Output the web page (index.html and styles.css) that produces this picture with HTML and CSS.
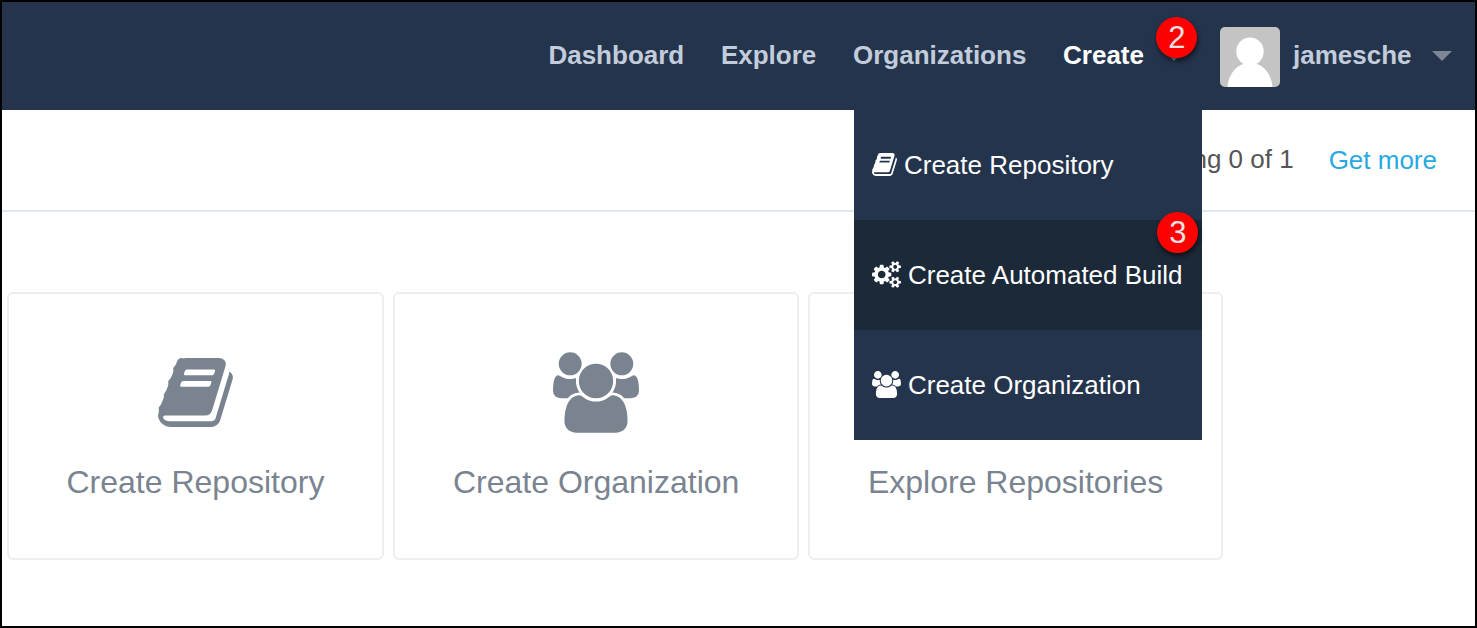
FILE: index.html
```
<!DOCTYPE html>
<html lang="en">
<head>
<meta charset="utf-8">
<title>Dashboard</title>
<link rel="stylesheet" href="styles.css">
</head>
<body>
<svg class="sprite" aria-hidden="true">
  <symbol id="book" viewBox="62 128 1668 1536"><path d="M1703 478q40 57 18 129l-275 906q-19 64-76.5 107.5t-122.5 43.5h-923q-77 0-148.5-53.5t-99.5-131.5q-24-67-2-127 0-4 3-27t4-37q1-8-3-21.5t-3-19.5q2-11 8-21t16.5-23.5 16.5-23.5q23-38 45-91.5t30-91.5q3-10 .5-30t-.5-28q3-11 17-28t17-23q21-36 42-92t25-90q1-9-2.5-32t.5-28q4-13 22-30.5t22-22.5q19-26 42.5-84.5t27.5-96.5q1-8-3-25.5t-2-26.5q2-8 9-18t18-23 17-21q8-12 16.5-30.5t15-35 16-36 19.5-32 26.5-23.5 36-11.5 47.5 5.5l-1 3q38-9 51-9h761q74 0 114 56t18 130l-274 906q-36 119-71.5 153.5t-128.5 34.5h-869q-27 0-38 15-11 16-1 43 24 70 144 70h923q29 0 56-15.5t35-41.5l300-987q7-22 5-57 38 15 59 43zm-1064 2q-4 13 2 22.5t20 9.5h608q13 0 25.5-9.5t16.5-22.5l21-64q4-13-2-22.5t-20-9.5h-608q-13 0-25.5 9.5t-16.5 22.5zm-83 256q-4 13 2 22.5t20 9.5h608q13 0 25.5-9.5t16.5-22.5l21-64q4-13-2-22.5t-20-9.5h-608q-13 0-25.5 9.5t-16.5 22.5z"/></symbol>
  <symbol id="cogs" viewBox="-64 0 1920 1792"><path d="M832 896q0-106-75-181t-181-75-181 75-75 181 75 181 181 75 181-75 75-181zm768 512q0-52-38-90t-90-38-90 38-38 90q0 53 37.5 90.5t90.5 37.5 90.5-37.5 37.5-90.5zm0-1024q0-52-38-90t-90-38-90 38-38 90q0 53 37.5 90.5t90.5 37.5 90.5-37.5 37.5-90.5zm-384 421v185q0 10-7 19.5t-16 10.5l-155 24q-11 35-32 76 34 48 90 115 7 11 7 20 0 12-7 19-23 30-82.5 89.5t-78.5 59.5q-11 0-21-7l-115-90q-37 19-77 31-11 108-23 155-7 24-30 24h-186q-11 0-20-7.5t-10-17.5l-23-153q-34-10-75-31l-118 89q-7 7-20 7-11 0-21-8-144-133-144-160 0-9 7-19 10-14 41-53t47-61q-23-44-35-82l-152-24q-10-1-17-9.5t-7-19.5v-185q0-10 7-19.5t16-10.5l155-24q11-35 32-76-34-48-90-115-7-11-7-20 0-12 7-20 22-30 82-89t79-59q11 0 21 7l115 90q34-18 77-32 11-108 23-154 7-24 30-24h186q11 0 20 7.5t10 17.5l23 153q34 10 75 31l118-89q8-7 20-7 11 0 21 8 144 133 144 160 0 8-7 19-12 16-42 54t-45 60q23 48 34 82l152 23q10 2 17 10.5t7 19.5zm640 533v140q0 16-149 31-12 27-30 52 51 113 51 138 0 4-4 7-122 71-124 71-8 0-46-47t-52-68q-20 2-30 2t-30-2q-14 21-52 68t-46 47q-2 0-124-71-4-3-4-7 0-25 51-138-18-25-30-52-149-15-149-31v-140q0-16 149-31 13-29 30-52-51-113-51-138 0-4 4-7 4-2 35-20t59-34 30-16q8 0 46 46.5t52 67.5q20-2 30-2t30 2q51-71 92-112l6-2q4 0 124 70 4 3 4 7 0 25-51 138 17 23 30 52 149 15 149 31zm0-1024v140q0 16-149 31-12 27-30 52 51 113 51 138 0 4-4 7-122 71-124 71-8 0-46-47t-52-68q-20 2-30 2t-30-2q-14 21-52 68t-46 47q-2 0-124-71-4-3-4-7 0-25 51-138-18-25-30-52-149-15-149-31v-140q0-16 149-31 13-29 30-52-51-113-51-138 0-4 4-7 4-2 35-20t59-34 30-16q8 0 46 46.5t52 67.5q20-2 30-2t30 2q51-71 92-112l6-2q4 0 124 70 4 3 4 7 0 25-51 138 17 23 30 52 149 15 149 31z"/></symbol>
  <symbol id="users" viewBox="-64 0 1920 1792"><path d="M529 896q-162 5-265 128h-134q-82 0-138-40.5t-56-118.5q0-353 124-353 6 0 43.5 21t97.5 42.5 119 21.5q67 0 133-23-5 37-5 66 0 139 81 256zm1071 637q0 120-73 189.5t-194 69.5h-874q-121 0-194-69.5t-73-189.5q0-53 3.5-103.5t14-109 26.5-108.5 43-97.5 62-81 85.5-53.5 111.5-20q10 0 43 21.5t73 48 107 48 135 21.5 135-21.5 107-48 73-48 43-21.5q61 0 111.5 20t85.5 53.5 62 81 43 97.5 26.5 108.5 14 109 3.5 103.5zm-1024-1277q0 106-75 181t-181 75-181-75-75-181 75-181 181-75 181 75 75 181zm704 384q0 159-112.5 271.5t-271.5 112.5-271.5-112.5-112.5-271.5 112.5-271.5 271.5-112.5 271.5 112.5 112.5 271.5zm576 225q0 78-56 118.5t-138 40.5h-134q-103-123-265-128 81-117 81-256 0-29-5-66 66 23 133 23 59 0 119-21.5t97.5-42.5 43.5-21q124 0 124 353zm-128-609q0 106-75 181t-181 75-181-75-75-181 75-181 181-75 181 75 75 181z"/></symbol>
</svg>
<div class="page">
  <header class="topbar">
    <nav class="nav">
      <a>Dashboard</a>
      <a>Explore</a>
      <a>Organizations</a>
      <div class="create">
        <a class="active">Create</a>
        <span class="caret"></span>
        <span class="badge badge-create">2</span>
        <div class="menu">
          <a class="menu-item"><svg class="icon-book"><use href="#book"/></svg>Create Repository</a>
          <a class="menu-item selected"><svg class="icon-wide"><use href="#cogs"/></svg>Create Automated Build<span class="badge badge-build">3</span></a>
          <a class="menu-item"><svg class="icon-wide"><use href="#users"/></svg>Create Organization</a>
        </div>
      </div>
    </nav>
    <div class="account">
      <svg class="avatar" viewBox="0 0 60 60"><rect width="60" height="60" fill="#c4c4c4"/><ellipse cx="30" cy="24.500" rx="13.700" ry="14" fill="#fff"/><path d="M7.500 60C8.500 48 15 39 25 36.500L24 34h12l-1 2.500C45 39 51.500 48 52.500 60z" fill="#fff"/></svg>
      <span class="username">jamesche</span>
      <span class="caret"></span>
    </div>
  </header>
  <div class="usage">
    <span class="count">Using 0 of 1</span>
    <a>Get more</a>
  </div>
  <main class="cards">
    <a class="card"><svg class="art-book"><use href="#book"/></svg><span>Create Repository</span></a>
    <a class="card"><svg class="art-users"><use href="#users"/></svg><span>Create Organization</span></a>
    <a class="card"><svg class="art-book"><use href="#book"/></svg><span>Explore Repositories</span></a>
  </main>
</div>
</body>
</html>
```
FILE: styles.css
```
* { box-sizing: border-box; }
body { margin: 0; font-family: "Liberation Sans", Arial, sans-serif; background: #fff; }
svg { fill: currentColor; display: block; flex: none; }
.sprite { position: absolute; width: 0; height: 0; }
.page { height: 628px; border: 2px solid #000; overflow: hidden; }
.topbar {
  height: 108px; background: #24344c; color: #c3ccda;
  display: flex; align-items: center; justify-content: flex-end;
  font-size: 26px; font-weight: bold; line-height: 30px;
  padding-right: 23px;
}
.nav { display: flex; gap: 36.7px; height: 100%; align-items: center; }
.nav > a, .active, .username { padding-bottom: 2px; }
.create { position: relative; height: 100%; display: flex; align-items: center; gap: 20.5px; }
.active { color: #fff; }
.caret { border: 10px solid transparent; border-top-color: #7c8793; border-bottom: 0; }
.account { display: flex; align-items: center; margin-left: 36px; }
.avatar { width: 60px; height: 60px; border-radius: 5px; margin-right: 12.5px; margin-top: 2px; }
.account .caret { margin-left: 20.5px; }
.badge {
  position: absolute; width: 41px; height: 41px; border-radius: 50%;
  background: #f00; color: #e2e2e2; font-size: 31px; font-weight: normal;
  line-height: 41px; text-align: center; box-shadow: 1px 3px 5px rgba(0,0,0,.6);
}
.badge-create { right: -13px; top: 15px; }
.badge-build { right: 4px; top: -8px; }
.menu { position: absolute; top: 108px; right: -18px; width: 348px; background: #24344c; color: #fff; font-weight: normal; z-index: 2; }
.menu-item { position: relative; display: flex; align-items: center; height: 110px; padding-left: 18px; gap: 6.5px; white-space: nowrap; }
.selected { background: #1b2938; }
.icon-book { width: 25px; height: 23px; margin-bottom: 1px; }
.icon-wide { width: 29px; height: 27px; margin-bottom: 1px; }
.usage {
  height: 102px; border-bottom: 2px solid #dfe7ef; padding-right: 38px;
  display: flex; align-items: center; justify-content: flex-end; gap: 35px;
  font-size: 26px; color: #555;
}
.count { padding-bottom: 2px; }
.usage a { color: #27aae1; }
.cards { display: flex; align-items: flex-start; gap: 9.6px; padding: 80px 0 0 5px; }
.card {
  height: 268px; border: 2px solid #eee; border-radius: 6px; padding: 58px 57.5px 0;
  display: flex; flex-direction: column; align-items: center; flex: none;
  color: #7a8491; font-size: 32px; line-height: 40px; white-space: nowrap;
}
.card span { margin-top: 29px; }
.art-book { width: 75px; height: 69px; margin: 6px 0; }
.art-users { width: 86px; height: 81px; }
```
